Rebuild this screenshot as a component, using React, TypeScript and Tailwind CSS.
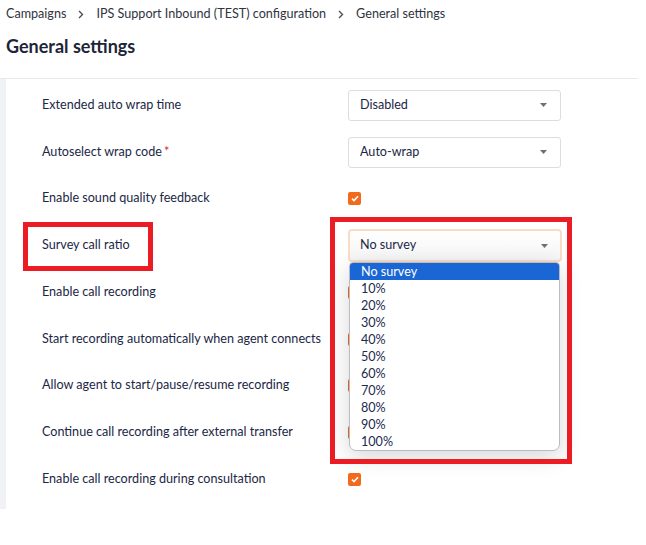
import React from "react";

type Row = {
  label: string;
  required?: boolean;
  kind: "select" | "check" | "survey";
  value?: string;
};

const rows: Row[] = [
  { label: "Extended auto wrap time", kind: "select", value: "Disabled" },
  { label: "Autoselect wrap code", required: true, kind: "select", value: "Auto-wrap" },
  { label: "Enable sound quality feedback", kind: "check" },
  { label: "Survey call ratio", kind: "survey", value: "No survey" },
  { label: "Enable call recording", kind: "check" },
  { label: "Start recording automatically when agent connects", kind: "check" },
  { label: "Allow agent to start/pause/resume recording", kind: "check" },
  { label: "Continue call recording after external transfer", kind: "check" },
  { label: "Enable call recording during consultation", kind: "check" },
];

const options = ["No survey", "10%", "20%", "30%", "40%", "50%", "60%", "70%", "80%", "90%", "100%"];

function Caret() {
  return (
    <svg width="7" height="4" viewBox="0 0 7 4" className="shrink-0">
      <path d="M0 0h7L3.5 4z" fill="#6b6f78" />
    </svg>
  );
}

function Chevron() {
  return (
    <svg width="6" height="9" viewBox="0 0 6 9" className="mx-[12px]">
      <path d="M1 1l3.5 3.5L1 8" fill="none" stroke="#4a4f5a" strokeWidth="1.4" />
    </svg>
  );
}

function Checkbox() {
  return (
    <div className="w-[13px] h-[13px] rounded-[2px] bg-[#f26a1b] flex items-center justify-center">
      <svg width="8" height="7" viewBox="0 0 8 7">
        <path d="M1 3.6l2 2L7 1.2" fill="none" stroke="#fff" strokeWidth="1.6" />
      </svg>
    </div>
  );
}

function Select({ value }: { value: string }) {
  return (
    <div className="w-[213px] h-[31px] border border-[#dcdde1] rounded-[3px] bg-white flex items-center justify-between pl-[11px] pr-[13px]">
      <span>{value}</span>
      <Caret />
    </div>
  );
}

function SurveySelect({ value }: { value: string }) {
  return (
    <div className="relative">
      <div className="w-[214px] h-[33px] border-2 border-[#f8dcc6] rounded-[4px] bg-gradient-to-b from-white to-[#f5f5f5] flex items-center justify-between pl-[10px] pr-[12px]">
        <span>{value}</span>
        <Caret />
      </div>
      <ul className="absolute left-[1px] top-[33px] w-[211px] z-10 bg-white border border-[#b9bcc2] rounded-b-[7px] rounded-t-[4px] overflow-hidden shadow-[0_6px_22px_rgba(0,0,0,0.16)]">
        {options.map((o, i) => (
          <li
            key={o}
            className={
              i === 0
                ? "h-[17px] leading-[17px] pl-[11px] bg-[#1a66d4] text-white"
                : "h-[17px] leading-[17px] pl-[11px] text-[#1c2a4f]"
            }
          >
            {o}
          </li>
        ))}
      </ul>
    </div>
  );
}

export default function App() {
  return (
    <div
      className="relative w-[646px] h-[545px] bg-white text-[12.6px] text-[#1c2745]"
      style={{ fontFamily: "Lato, 'Noto Sans', sans-serif" }}
    >
      <header className="w-[638px] h-[79px] border-b border-[#e9e9ec] px-[6px]">
        <nav className="flex items-center h-[27px] pt-[1px] text-[#2f3440]">
          <span>Campaigns</span>
          <Chevron />
          <span>IPS Support Inbound (TEST) configuration</span>
          <Chevron />
          <span>General settings</span>
        </nav>
        <h1 className="mt-[8px] text-[18px] font-bold text-[#1d2538] leading-[22px]">General settings</h1>
      </header>

      <div className="flex w-[638px]">
        <div className="w-[6px] bg-[#f1f2f5]" />
        <div className="flex-1 pl-[36px] pt-[3px] pb-[6px]">
          {rows.map((r) => (
            <div key={r.label} className="grid grid-cols-[306px_214px] items-center h-[46.75px]">
              <div>
                {r.label}
                {r.required && <span className="text-[#e0242c] ml-[2px]">*</span>}
              </div>
              <div className="flex items-center">
                {r.kind === "select" && <Select value={r.value!} />}
                {r.kind === "check" && <Checkbox />}
                {r.kind === "survey" && <SurveySelect value={r.value!} />}
              </div>
            </div>
          ))}
        </div>
      </div>

      {/* highlight frames */}
      <div className="absolute left-[23px] top-[222px] w-[130px] h-[49px] border-[5px] border-[#ec1c24] pointer-events-none" />
      <div className="absolute left-[330px] top-[217px] w-[242px] h-[247px] border-[5px] border-[#ec1c24] pointer-events-none z-20" />
    </div>
  );
}
